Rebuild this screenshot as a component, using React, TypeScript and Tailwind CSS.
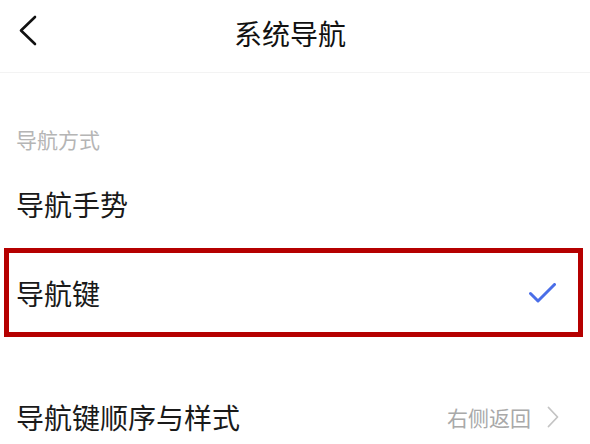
import React from "react";

export default function App() {
  return (
    <div
      className="w-[590px] h-[444px] overflow-hidden bg-white text-[#1a1a1a]"
      style={{ fontFamily: '"Noto Sans CJK SC", "Noto Sans", sans-serif' }}
    >
      {/* Header */}
      <div className="relative h-[73px] pb-[7px] flex items-center justify-center border-b border-[#f3f3f3]">
        <svg
          className="absolute left-[18px] top-[15px]"
          width="20"
          height="32"
          viewBox="0 0 20 32"
          fill="none"
        >
          <polyline
            points="17,2 3,15.5 17,29"
            stroke="#111"
            strokeWidth="2.6"
            strokeLinecap="round"
            strokeLinejoin="round"
          />
        </svg>
        <div className="text-[28px] leading-none text-[#111] -ml-[10px]">系统导航</div>
      </div>

      {/* Section label */}
      <div className="mt-[42px] h-[49px] flex items-center pl-[16px] text-[21px] leading-none text-[#b5b5b5]">
        导航方式
      </div>

      {/* Gesture */}
      <div className="h-[80px] flex items-center pl-[16px] text-[28px] leading-none">
        导航手势
      </div>

      {/* Navigation keys (highlighted) */}
      <div className="mt-[4px] ml-[4px] mr-[7px] h-[89px] border-[5px] border-[#b50000] flex items-center justify-between pl-[7px] pr-[22px]">
        <span className="text-[28px] leading-none">导航键</span>
        <svg width="27" height="20" viewBox="0 0 27 20" fill="none">
          <polyline
            points="1.5,10.5 9,18 25.5,1.5"
            stroke="#4a6ee8"
            strokeWidth="3"
            strokeLinecap="round"
            strokeLinejoin="round"
          />
        </svg>
      </div>

      {/* Order & style */}
      <div className="mt-[40px] h-[80px] flex items-center justify-between pl-[16px] pr-[31px]">
        <span className="text-[28px] leading-none">导航键顺序与样式</span>
        <div className="flex items-center gap-[16px]">
          <span className="text-[21px] leading-none text-[#a9a9a9]">右侧返回</span>
          <svg width="12" height="22" viewBox="0 0 12 22" fill="none">
            <polyline
              points="1.5,1.5 10.5,11 1.5,20.5"
              stroke="#c4c4c4"
              strokeWidth="1.8"
              strokeLinecap="round"
              strokeLinejoin="round"
            />
          </svg>
        </div>
      </div>
    </div>
  );
}
